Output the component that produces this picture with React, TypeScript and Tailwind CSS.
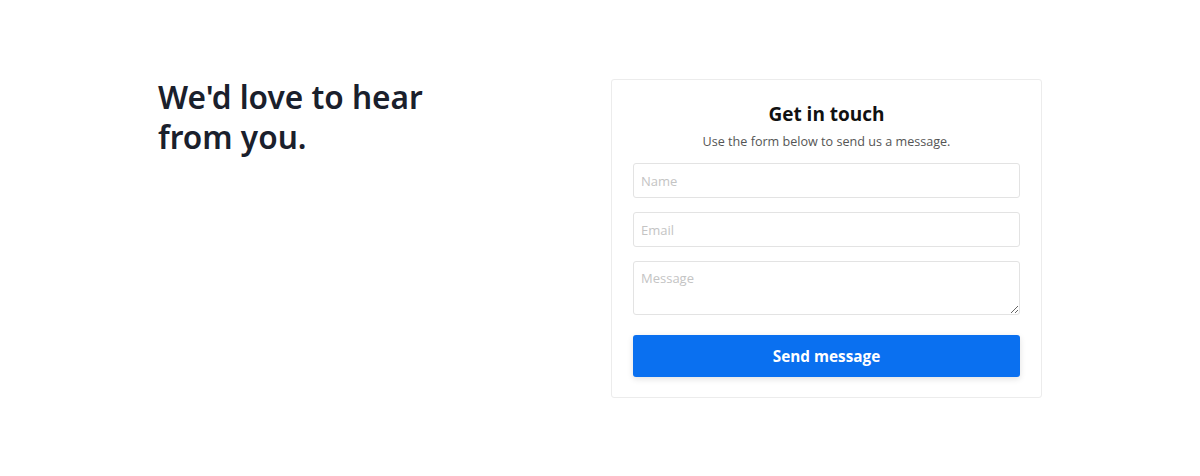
export default function App() {
  return (
    <div className="w-[1200px] h-[476px] bg-white" style={{ fontFamily: '"Open Sans", sans-serif' }}>
      <div className="mx-auto w-[884px] pt-[79px] flex justify-between">
        <h1 className="-mt-[2px] text-[31.6px] leading-[40px] font-semibold text-[#1a202c] w-[300px]" style={{ fontFamily: '"Noto Sans", sans-serif' }}>
          We'd love to hear from you.
        </h1>
        <div className="w-[431px] border border-[#ececec] rounded-[3px] px-[21px] pt-[20px] pb-[20px]">
          <h2 className="text-center text-[19px] leading-[28px] font-bold text-[#111]">Get in touch</h2>
          <p className="text-center text-[12.6px] leading-[20px] mt-[4px] text-[#555]">Use the form below to send us a message.</p>
          <div className="mt-[11px] flex flex-col gap-[14px]">
            <input className="h-[35px] w-full border border-[#e3e3e3] rounded-[3px] px-[7px] text-[13px] placeholder:text-[#c4c4c4] outline-none" placeholder="Name" />
            <input className="h-[35px] w-full border border-[#e3e3e3] rounded-[3px] px-[7px] text-[13px] placeholder:text-[#c4c4c4] outline-none" placeholder="Email" />
            <textarea className="h-[54px] w-full border border-[#e3e3e3] rounded-[3px] px-[7px] py-[7px] text-[13px] placeholder:text-[#c4c4c4] outline-none block" placeholder="Message" />
          </div>
          <button className="mt-[20px] w-full h-[42px] rounded-[3px] bg-[#0a70f0] text-white text-[15.3px] font-bold shadow-[0_2px_6px_rgba(0,0,0,0.12)]">Send message</button>
        </div>
      </div>
    </div>
  );
}
